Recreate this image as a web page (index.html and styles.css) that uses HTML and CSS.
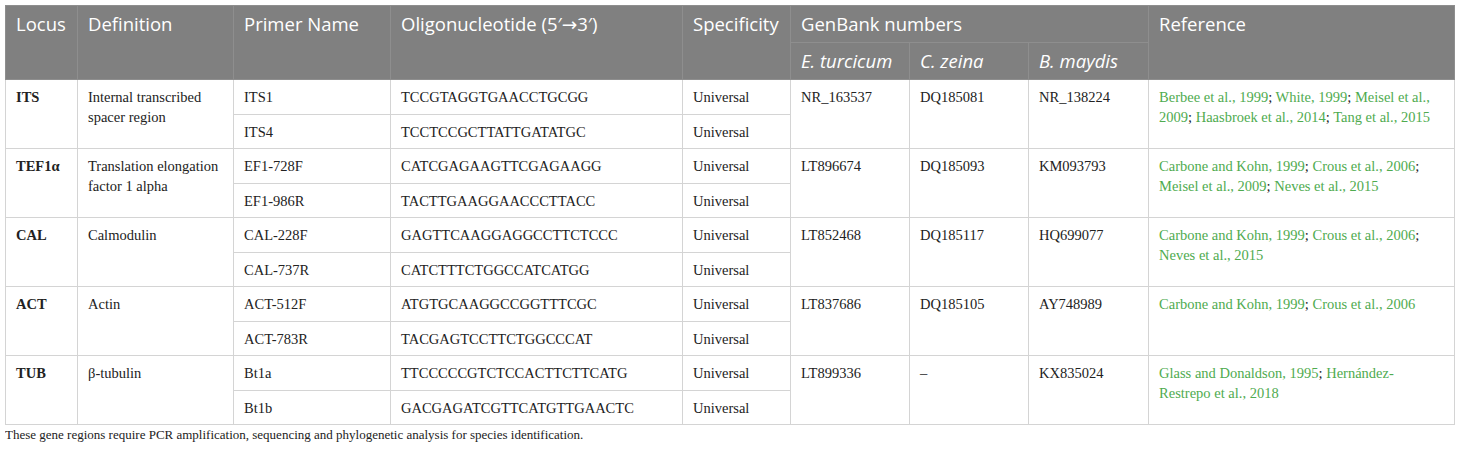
FILE: index.html
```html
<!DOCTYPE html>
<html lang="en">
<head>
<meta charset="utf-8">
<title>Primers</title>
<link rel="stylesheet" href="styles.css">
</head>
<body>
<table class="primers">
  <colgroup>
    <col class="c-locus"><col class="c-def"><col class="c-primer"><col class="c-oligo"><col class="c-spec">
    <col class="c-gb1"><col class="c-gb2"><col class="c-gb3"><col class="c-ref">
  </colgroup>
  <thead>
    <tr>
      <th rowspan="2">Locus</th>
      <th rowspan="2">Definition</th>
      <th rowspan="2">Primer Name</th>
      <th rowspan="2">Oligonucleotide (5′→3′)</th>
      <th rowspan="2">Specificity</th>
      <th colspan="3">GenBank numbers</th>
      <th rowspan="2">Reference</th>
    </tr>
    <tr>
      <th class="sp">E. turcicum</th>
      <th class="sp">C. zeina</th>
      <th class="sp">B. maydis</th>
    </tr>
  </thead>
  <tbody>
    <tr>
      <td rowspan="2" class="locus">ITS</td>
      <td rowspan="2">Internal transcribed spacer region</td>
      <td>ITS1</td><td>TCCGTAGGTGAACCTGCGG</td><td>Universal</td>
      <td rowspan="2">NR_163537</td><td rowspan="2">DQ185081</td><td rowspan="2">NR_138224</td>
      <td rowspan="2" class="refcell"><span class="ref">Berbee et al., 1999</span>; <span class="ref">White, 1999</span>; <span class="ref">Meisel et al., 2009</span>; <span class="ref">Haasbroek et al., 2014</span>; <span class="ref">Tang et al., 2015</span></td>
    </tr>
    <tr><td>ITS4</td><td>TCCTCCGCTTATTGATATGC</td><td>Universal</td></tr>
    <tr>
      <td rowspan="2" class="locus">TEF1α</td>
      <td rowspan="2">Translation elongation factor 1 alpha</td>
      <td>EF1-728F</td><td>CATCGAGAAGTTCGAGAAGG</td><td>Universal</td>
      <td rowspan="2">LT896674</td><td rowspan="2">DQ185093</td><td rowspan="2">KM093793</td>
      <td rowspan="2" class="refcell"><span class="ref">Carbone and Kohn, 1999</span>; <span class="ref">Crous et al., 2006</span>; <span class="ref">Meisel et al., 2009</span>; <span class="ref">Neves et al., 2015</span></td>
    </tr>
    <tr><td>EF1-986R</td><td>TACTTGAAGGAACCCTTACC</td><td>Universal</td></tr>
    <tr>
      <td rowspan="2" class="locus">CAL</td>
      <td rowspan="2">Calmodulin</td>
      <td>CAL-228F</td><td>GAGTTCAAGGAGGCCTTCTCCC</td><td>Universal</td>
      <td rowspan="2">LT852468</td><td rowspan="2">DQ185117</td><td rowspan="2">HQ699077</td>
      <td rowspan="2" class="refcell"><span class="ref">Carbone and Kohn, 1999</span>; <span class="ref">Crous et al., 2006</span>; <span class="ref">Neves et al., 2015</span></td>
    </tr>
    <tr><td>CAL-737R</td><td>CATCTTTCTGGCCATCATGG</td><td>Universal</td></tr>
    <tr>
      <td rowspan="2" class="locus">ACT</td>
      <td rowspan="2">Actin</td>
      <td>ACT-512F</td><td>ATGTGCAAGGCCGGTTTCGC</td><td>Universal</td>
      <td rowspan="2">LT837686</td><td rowspan="2">DQ185105</td><td rowspan="2">AY748989</td>
      <td rowspan="2" class="refcell"><span class="ref">Carbone and Kohn, 1999</span>; <span class="ref">Crous et al., 2006</span></td>
    </tr>
    <tr><td>ACT-783R</td><td>TACGAGTCCTTCTGGCCCAT</td><td>Universal</td></tr>
    <tr>
      <td rowspan="2" class="locus">TUB</td>
      <td rowspan="2">β-tubulin</td>
      <td>Bt1a</td><td>TTCCCCCGTCTCCACTTCTTCATG</td><td>Universal</td>
      <td rowspan="2">LT899336</td><td rowspan="2">–</td><td rowspan="2">KX835024</td>
      <td rowspan="2" class="refcell"><span class="ref">Glass and Donaldson, 1995</span>; <span class="ref">Hernández-Restrepo et al., 2018</span></td>
    </tr>
    <tr><td>Bt1b</td><td>GACGAGATCGTTCATGTTGAACTC</td><td>Universal</td></tr>
  </tbody>
</table>
<p class="note">These gene regions require PCR amplification, sequencing and phylogenetic analysis for species identification.</p>
</body>
</html>
```

FILE: styles.css
```css
body {
  margin: 5px;
  font-family: "Liberation Serif", "Times New Roman", serif;
  color: #222;
  background: #fff;
}

.primers {
  border-collapse: collapse;
  table-layout: fixed;
  width: 1449px;
}

.c-locus { width: 72px; }
.c-def { width: 156px; }
.c-primer { width: 157px; }
.c-oligo { width: 292px; }
.c-spec { width: 108px; }
.c-gb1 { width: 119px; }
.c-gb2 { width: 119px; }
.c-gb3 { width: 120px; }
.c-ref { width: 306px; }

.primers th {
  background: #808080;
  color: #fff;
  font-family: "Open Sans", "DejaVu Sans", sans-serif;
  font-weight: 400;
  font-size: 18.5px;
  line-height: 25px;
  text-align: left;
  vertical-align: top;
  padding: 5px 6px 6px 10px;
  border: 1px solid #8e8e8e;
  white-space: nowrap;
}

.primers th.sp {
  font-style: italic;
}

.primers td {
  font-size: 14.5px;
  line-height: 19.5px;
  text-align: left;
  vertical-align: top;
  padding: 8px 6px 6px 10px;
  border: 1px solid #d4d4d4;
}

.primers td.locus {
  font-weight: 700;
}

.primers td.refcell {
  padding-right: 20px;
}

.ref {
  color: #4fab4f;
}

.note {
  margin: 3px 0 0;
  font-size: 13px;
  line-height: 14px;
}
```
